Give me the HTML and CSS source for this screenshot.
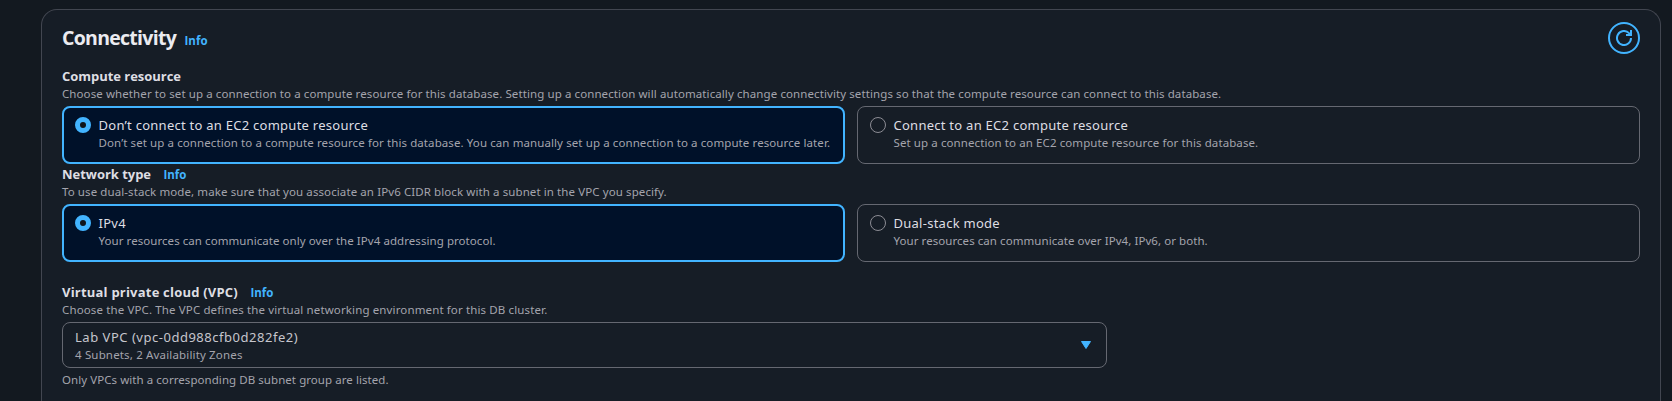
FILE: index.html
```html
<!DOCTYPE html>
<html lang="en">
<head>
<meta charset="utf-8">
<title>Connectivity</title>
<link rel="stylesheet" href="styles.css">
</head>
<body>
<section class="panel">
  <header class="panel-header">
    <div class="heading"><h2>Connectivity</h2><a class="info">Info</a></div>
    <button class="refresh" aria-label="Refresh">
      <svg width="16" height="16" viewBox="0 0 16 16" fill="none" stroke="currentColor" stroke-width="2"><path d="M15 8a7 7 0 1 1-2-4.9L15 5"/><path d="M10 5h5V0"/></svg>
    </button>
  </header>
  <div class="field">
    <div class="label"><span>Compute resource</span></div>
    <div class="description">Choose whether to set up a connection to a compute resource for this database. Setting up a connection will automatically change connectivity settings so that the compute resource can connect to this database.</div>
    <div class="tiles">
      <div class="tile selected"><span class="radio"></span><div><div class="tile-title">Don’t connect to an EC2 compute resource</div><div class="description">Don’t set up a connection to a compute resource for this database. You can manually set up a connection to a compute resource later.</div></div></div>
      <div class="tile"><span class="radio"></span><div><div class="tile-title">Connect to an EC2 compute resource</div><div class="description">Set up a connection to an EC2 compute resource for this database.</div></div></div>
    </div>
  </div>
  <div class="field">
    <div class="label"><span>Network type</span><a class="info">Info</a></div>
    <div class="description">To use dual-stack mode, make sure that you associate an IPv6 CIDR block with a subnet in the VPC you specify.</div>
    <div class="tiles">
      <div class="tile selected"><span class="radio"></span><div><div class="tile-title">IPv4</div><div class="description tight">Your resources can communicate only over the IPv4 addressing protocol.</div></div></div>
      <div class="tile"><span class="radio"></span><div><div class="tile-title">Dual-stack mode</div><div class="description tight">Your resources can communicate over IPv4, IPv6, or both.</div></div></div>
    </div>
  </div>
  <div class="field vpc">
    <div class="label"><span>Virtual private cloud (VPC)</span><a class="info">Info</a></div>
    <div class="description loose">Choose the VPC. The VPC defines the virtual networking environment for this DB cluster.</div>
    <div class="select">
      <div><div class="select-title">Lab VPC (vpc-0dd988cfb0d282fe2)</div><div class="description select-detail">4 Subnets, 2 Availability Zones</div></div>
      <svg class="caret" width="10" height="8" viewBox="0 0 10 8"><path d="M.5.5h9L5 7.5z" fill="currentColor" stroke="currentColor" stroke-linejoin="round"/></svg>
    </div>
    <div class="description tight constraint">Only VPCs with a corresponding DB subnet group are listed.</div>
  </div>
</section>
</body>
</html>
```
FILE: styles.css
```css
* { box-sizing: border-box; }
body {
  margin: 0;
  height: 401px;
  padding: 9px 11px 0 41px;
  background: #131920;
  color: #dedee3;
  font: 13px/20px "Noto Sans", "Open Sans", sans-serif;
}
.panel {
  height: 392px;
  padding: 12px 20px 0;
  background: #161d26;
  border: 1px solid #424650;
  border-bottom: 0;
  border-radius: 16px 16px 0 0;
}
.panel-header { display: flex; justify-content: space-between; height: 44px; }
.heading { display: flex; align-items: baseline; gap: 8.5px; padding-top: 4px; height: 28px; }
h2 { margin: 0; font: 700 19.5px/24px "Open Sans", sans-serif; color: #ebebf0; letter-spacing: -0.72px; }
.info { color: #42b4ff; font: 700 11.5px/16px "Open Sans", sans-serif; letter-spacing: 0; }
.refresh {
  display: flex; align-items: center; justify-content: center;
  width: 32px; height: 32px; padding: 0;
  background: none; border: 2px solid #42b4ff; border-radius: 50%; color: #42b4ff;
}
.label {
  display: flex; align-items: baseline; gap: 12.5px; height: 20px; padding-top: 0;
  font-family: "Open Sans", sans-serif; font-weight: 700; letter-spacing: -0.03px;
}
.description { height: 16px; font-size: 11.5px; line-height: 16px; color: #a4a4ad; white-space: nowrap; letter-spacing: 0.096px; }
.description.tight { letter-spacing: 0.062px; }
.description.loose { letter-spacing: 0.13px; }
.description.select-detail { letter-spacing: 0.16px; }
.tiles { display: grid; grid-template-columns: repeat(2, minmax(0, 1fr)); gap: 12px; margin-top: 4px; }
.tile {
  display: flex; gap: 7.5px; height: 58px; padding: 8px 12px;
  border: 1px solid #656871; border-radius: 8px;
}
.tile.selected { padding: 7px 11px; border: 2px solid #42b4ff; background: #001129; }
.tile-title { letter-spacing: 0.26px; }
.radio { flex: none; width: 16px; height: 16px; margin-top: 2px; border: 1px solid #8c8c94; border-radius: 50%; }
.selected .radio { border: 5px solid #42b4ff; background: #0f141a; }
.vpc { margin-top: 20px; }
.vpc .label { letter-spacing: 0.21px; }
.select {
  display: flex; justify-content: space-between; align-items: center;
  width: 1045px; height: 46px; margin-top: 4px; padding: 0 15px 0 12px;
  border: 1px solid #656871; border-radius: 8px;
}
.select-title { height: 20px; line-height: 20px; color: #c6c6cd; letter-spacing: 0.52px; }
.caret { color: #42b4ff; }
.constraint { margin-top: 4px; }
```
